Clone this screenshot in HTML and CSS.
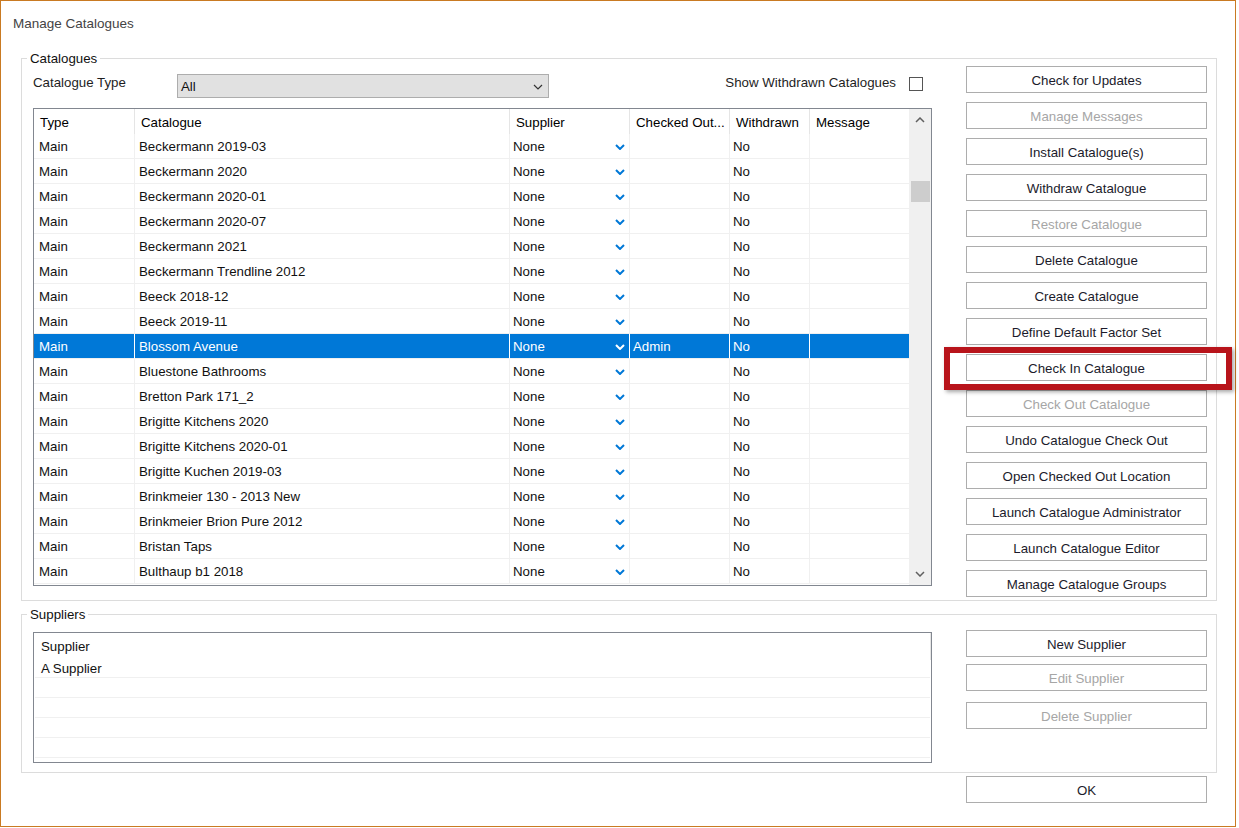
FILE: index.html
```html
<!DOCTYPE html>
<html lang="en">
<head>
  <meta charset="UTF-8">
  <title>Manage Catalogues</title>
  <link rel="stylesheet" href="styles.css">
</head>
<body>
  <div class="window">
    <div class="title">Manage Catalogues</div>

    <fieldset class="group">
      <legend>Catalogues</legend>
      <div class="group-body">
        <div class="left">
          <div class="filter-row">
            <label class="filter-label">Catalogue Type</label>
            <div class="combo">
              <span>All</span>
              <svg width="10" height="6" viewBox="0 0 10 6"><path d="M1 1 L5 5 L9 1" fill="none" stroke="#333" stroke-width="1.2"/></svg>
            </div>
            <div class="withdrawn">
              <span>Show Withdrawn Catalogues</span>
              <span class="checkbox"></span>
            </div>
          </div>

          <div class="grid">
            <div class="grid-main">
              <div class="row head">
                <div class="cell">Type</div>
                <div class="cell">Catalogue</div>
                <div class="cell">Supplier</div>
                <div class="cell">Checked Out...</div>
                <div class="cell">Withdrawn</div>
                <div class="cell">Message</div>
              </div>
              <div id="rows"></div>
            </div>
            <div class="vscroll">
              <div class="arrow"><svg width="10" height="6" viewBox="0 0 10 6"><path d="M1 5 L5 1 L9 5" fill="none" stroke="#606060" stroke-width="1.5"/></svg></div>
              <div class="track"><div class="thumb"></div></div>
              <div class="arrow"><svg width="10" height="6" viewBox="0 0 10 6"><path d="M1 1 L5 5 L9 1" fill="none" stroke="#606060" stroke-width="1.5"/></svg></div>
            </div>
          </div>
        </div>

        <div class="buttons">
          <button>Check for Updates</button>
          <button disabled>Manage Messages</button>
          <button>Install Catalogue(s)</button>
          <button>Withdraw Catalogue</button>
          <button disabled>Restore Catalogue</button>
          <button>Delete Catalogue</button>
          <button>Create Catalogue</button>
          <button>Define Default Factor Set</button>
          <button>Check In Catalogue</button>
          <button disabled>Check Out Catalogue</button>
          <button>Undo Catalogue Check Out</button>
          <button>Open Checked Out Location</button>
          <button>Launch Catalogue Administrator</button>
          <button>Launch Catalogue Editor</button>
          <button>Manage Catalogue Groups</button>
        </div>
      </div>
    </fieldset>

    <fieldset class="group suppliers">
      <legend>Suppliers</legend>
      <div class="group-body">
        <div class="left">
          <div class="sup-list">
            <div class="sup-head"><span>Supplier</span></div>
            <div class="sup-row">A Supplier</div>
            <div class="sup-row"></div>
            <div class="sup-row"></div>
            <div class="sup-row"></div>
            <div class="sup-row"></div>
          </div>
        </div>
        <div class="buttons sup-buttons">
          <button>New Supplier</button>
          <button disabled>Edit Supplier</button>
          <button class="delete" disabled>Delete Supplier</button>
        </div>
      </div>
    </fieldset>

    <div class="footer">
      <button>OK</button>
    </div>

    <div class="red-mark"></div>
  </div>

  <script>
    var catalogues = [
      "Beckermann 2019-03", "Beckermann 2020", "Beckermann 2020-01", "Beckermann 2020-07",
      "Beckermann 2021", "Beckermann Trendline 2012", "Beeck 2018-12", "Beeck 2019-11",
      "Blossom Avenue", "Bluestone Bathrooms", "Bretton Park 171_2", "Brigitte Kitchens 2020",
      "Brigitte Kitchens 2020-01", "Brigitte Kuchen 2019-03", "Brinkmeier 130 - 2013 New",
      "Brinkmeier Brion Pure 2012", "Bristan Taps", "Bulthaup b1 2018"
    ];
    var rows = document.getElementById("rows");
    var html = "";
    catalogues.forEach(function (name) {
      var selected = name == "Blossom Avenue";
      html += '<div class="row' + (selected ? ' selected' : '') + '">' +
        '<div class="cell">Main</div>' +
        '<div class="cell cat">' + name + '</div>' +
        '<div class="cell sup"><span>None</span><svg width="10" height="6" viewBox="0 0 10 6"><path d="M1 1 L5 5 L9 1" fill="none" stroke-width="2"/></svg></div>' +
        '<div class="cell">' + (selected ? 'Admin' : '') + '</div>' +
        '<div class="cell">No</div>' +
        '<div class="cell"></div>' +
        '</div>';
    });
    rows.innerHTML = html;
  </script>
</body>
</html>
```

FILE: styles.css
```css
body {
  margin: 0;
  background: #fff;
  font-family: "Liberation Sans", Arial, sans-serif;
  font-size: 13.3px;
  color: #111;
}

.window {
  position: relative;
  width: 1234px;
  height: 825px;
  border: 1px solid #c97a22;
  background: #fff;
}

.title {
  padding: 14px 12px 0;
  line-height: 17px;
  font-size: 13.5px;
  color: #444;
}

/* group boxes */
.group {
  margin: 19px 0 0 20px;
  padding: 0;
  width: 1194px;
  border: 1px solid #dcdcdc;
  min-inline-size: 0;
}

.group legend {
  margin-left: 5px;
  padding: 0 3px;
  line-height: 15px;
  color: #111;
}

.group-body {
  display: flex;
  align-items: flex-start;
}

.left {
  margin-left: 11px;
  width: 899px;
  padding-bottom: 14px;
}

/* filter row */
.filter-row {
  display: flex;
  align-items: flex-start;
  height: 24px;
  margin-top: 8px;
}

.filter-label {
  width: 144px;
  line-height: 18px;
  color: #1e1e1e;
}

.combo {
  box-sizing: border-box;
  width: 372px;
  height: 24px;
  border: 1px solid #adadad;
  background: #e1e1e1;
  display: flex;
  align-items: center;
  justify-content: space-between;
  padding: 1px 5px 0 3px;
  line-height: 21px;
}

.withdrawn {
  margin-left: auto;
  display: flex;
  align-items: flex-start;
  line-height: 18px;
  color: #1e1e1e;
}

.checkbox {
  box-sizing: border-box;
  width: 14px;
  height: 14px;
  margin: 3px 9px 0 13px;
  border: 1px solid #555;
  background: #fff;
}

/* catalogue grid */
.grid {
  box-sizing: border-box;
  display: flex;
  height: 478px;
  margin-top: 10px;
  border: 1px solid #828790;
  overflow: hidden;
}

.grid-main {
  width: 875px;
  flex: none;
}

.row {
  display: grid;
  grid-template-columns: 100px 375px 120px 100px 80px 100px;
}

.cell {
  height: 24px;
  line-height: 26px;
  padding-left: 3px;
  border-left: 1px solid #f0f0f0;
  border-bottom: 1px solid #f0f0f0;
  white-space: nowrap;
  overflow: hidden;
}

.cell:first-child {
  border-left: none;
  padding-left: 5px;
}

.cell.cat {
  padding-left: 4px;
}

.cell.sup {
  display: flex;
  align-items: flex-start;
  justify-content: space-between;
  padding-right: 4px;
}

.cell.sup svg {
  margin-top: 10px;
}

.cell.sup svg path {
  stroke: #0078d7;
}

.head .cell {
  height: 25px;
  line-height: 27px;
  padding-left: 6px;
  border-bottom: none;
  border-left-color: #e5e5e5;
  color: #000;
}

.head .cell:first-child {
  padding-left: 6px;
}

.row.selected .cell {
  background: #0078d7;
  color: #fff;
  border-left-color: #fff;
}

.row.selected .cell.sup svg path {
  stroke: #fff;
}

.vscroll {
  flex: 1;
  background: #f0f0f0;
  display: flex;
  flex-direction: column;
}

.vscroll .arrow {
  height: 22px;
  display: flex;
  align-items: center;
  justify-content: center;
}

.vscroll .track {
  flex: 1;
}

.thumb {
  margin: 50px 1px 0 2px;
  height: 21px;
  background: #cdcdcd;
}

/* buttons */
.buttons {
  display: flex;
  flex-direction: column;
  gap: 9px;
  margin-left: 34px;
  width: 241px;
}

button {
  box-sizing: border-box;
  width: 241px;
  height: 27px;
  border: 1px solid #adadad;
  background: #fff;
  font-family: "Liberation Sans", Arial, sans-serif;
  font-size: 13.3px;
  color: #1b1b2b;
  padding: 2px 0 0;
}

button:disabled {
  color: #a6a6a6;
}

/* suppliers */
.suppliers {
  margin-top: 6px;
}

.suppliers .left {
  padding-bottom: 9px;
}

.sup-list {
  box-sizing: border-box;
  height: 131px;
  margin-top: 10px;
  border: 1px solid #828790;
}

.sup-head {
  height: 25px;
  line-height: 27px;
}

.sup-head span {
  display: block;
  width: 889px;
  padding-left: 7px;
  border-right: 1px solid #e5e5e5;
}

.sup-row {
  height: 19px;
  line-height: 21px;
  margin: 0 1px;
  padding-left: 6px;
  border-bottom: 1px solid #f0f0f0;
}

.sup-buttons {
  margin-top: 8px;
  gap: 7px;
}

.sup-buttons .delete {
  margin-top: 4px;
}

.footer {
  padding-left: 965px;
  margin-top: 3px;
}

/* highlight drawn over the Check In button */
.red-mark {
  position: absolute;
  left: 943px;
  top: 346px;
  width: 288px;
  height: 43px;
  box-sizing: border-box;
  border: 6px solid #b8141b;
  box-shadow: 2px 2px 4px rgba(0, 0, 0, 0.35);
}
```
